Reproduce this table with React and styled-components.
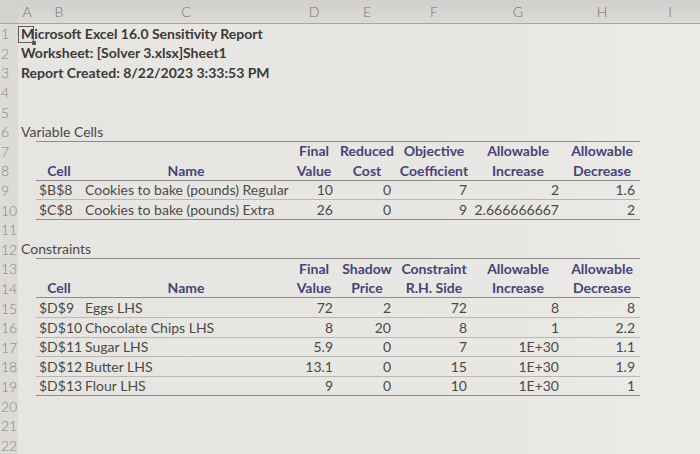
import React from "react";
import styled, { createGlobalStyle } from "styled-components";

const GlobalStyle = createGlobalStyle`
	html, body {
		margin: 0;
		padding: 0;
		background: #e8e6e2;
	}
	body {
		font-family: Lato, "Open Sans", "Liberation Sans", sans-serif;
		overflow: hidden;
	}
`;

// column widths: row numbers, A .. I
const COLS = ["A", "B", "C", "D", "E", "F", "G", "H", "I"];
const WIDTHS = "18px 18px 46px 208px 48px 58px 76px 92px 76px 1fr";

const Sheet = styled.div`
	display: grid;
	grid-template-columns: ${WIDTHS};
	grid-template-rows: 24px;
	grid-auto-rows: 19.6px;
	width: 700px;
	height: 454px;
	background: linear-gradient(90deg, #e7e5e1 0%, #e9e7e3 70%, #ecebe8 100%);
`;

const Corner = styled.div`
	background: #d4d2ce;
	border-bottom: 1px solid #a8a6a2;
`;

const ColHead = styled.div`
	display: flex;
	align-items: center;
	justify-content: center;
	background: linear-gradient(#d2d0cc, #dcdad6);
	border-bottom: 1px solid #a8a6a2;
	color: #747370;
	font-size: 14px;
	font-weight: 300;
`;

const RowNum = styled.div`
	display: flex;
	align-items: center;
	justify-content: flex-start;
	padding-left: 1px;
	background: #dddbd7;
	color: #858481;
	font-size: 14px;
	font-weight: 300;
`;

const Cell = styled.div`
	position: relative;
	display: flex;
	align-items: flex-end;
	justify-content: ${(p) =>
		p.$align === "right" ? "flex-end" : p.$align === "center" ? "center" : "flex-start"};
	padding: 0 ${(p) => (p.$align === "right" ? "5px" : "3px")} 1px 3px;
	white-space: nowrap;
	overflow: visible;
	font-size: 14px;
	font-weight: ${(p) => (p.$bold ? 700 : 400)};
	color: ${(p) => (p.$head ? "#45437a" : p.$bold ? "#3a3a38" : "#4a4947")};
	border-bottom: ${(p) =>
		p.$line === "strong"
			? "1px solid #8e8c88"
			: p.$line === "light"
			? "1px solid #b9b7b3"
			: "1px solid transparent"};
	z-index: ${(p) => (p.$span ? 1 : 0)};
`;

const Selected = styled.div`
	position: absolute;
	left: 0;
	top: 2px;
	width: 16px;
	height: 17px;
	border: 1.5px solid #5b5e57;
	box-sizing: border-box;
	&::after {
		content: "";
		position: absolute;
		right: -3px;
		bottom: -3px;
		width: 4px;
		height: 4px;
		background: #5b5e57;
	}
`;

// cell content: row -> col -> { t, align, bold, head }
const H = (t, align = "center") => ({ t, align, bold: true, head: true });
const N = (t) => ({ t, align: "right" });
const L = (t) => ({ t, align: "left" });

const data = {
	1: { A: { t: "Microsoft Excel 16.0 Sensitivity Report", bold: true, sel: true } },
	2: { A: { t: "Worksheet: [Solver 3.xlsx]Sheet1", bold: true } },
	3: { A: { t: "Report Created: 8/22/2023 3:33:53 PM", bold: true } },
	6: { A: L("Variable Cells") },
	7: {
		D: H("Final"),
		E: H("Reduced"),
		F: H("Objective"),
		G: H("Allowable"),
		H: H("Allowable"),
	},
	8: {
		B: H("Cell"),
		C: H("Name"),
		D: H("Value"),
		E: H("Cost"),
		F: H("Coefficient"),
		G: H("Increase"),
		H: H("Decrease"),
	},
	9: {
		B: L("$B$8"),
		C: L("Cookies to bake (pounds) Regular"),
		D: N("10"),
		E: N("0"),
		F: N("7"),
		G: N("2"),
		H: N("1.6"),
	},
	10: {
		B: L("$C$8"),
		C: L("Cookies to bake (pounds) Extra"),
		D: N("26"),
		E: N("0"),
		F: N("9"),
		G: N("2.666666667"),
		H: N("2"),
	},
	12: { A: L("Constraints") },
	13: {
		D: H("Final"),
		E: H("Shadow"),
		F: H("Constraint"),
		G: H("Allowable"),
		H: H("Allowable"),
	},
	14: {
		B: H("Cell"),
		C: H("Name"),
		D: H("Value"),
		E: H("Price"),
		F: H("R.H. Side"),
		G: H("Increase"),
		H: H("Decrease"),
	},
};

// constraint rows
const constraints = [
	["$D$9", "Eggs LHS", "72", "2", "72", "8", "8"],
	["$D$10", "Chocolate Chips LHS", "8", "20", "8", "1", "2.2"],
	["$D$11", "Sugar LHS", "5.9", "0", "7", "1E+30", "1.1"],
	["$D$12", "Butter LHS", "13.1", "0", "15", "1E+30", "1.9"],
	["$D$13", "Flour LHS", "9", "0", "10", "1E+30", "1"],
];
constraints.forEach((c, i) => {
	data[15 + i] = {
		B: L(c[0]),
		C: L(c[1]),
		D: N(c[2]),
		E: N(c[3]),
		F: N(c[4]),
		G: N(c[5]),
		H: N(c[6]),
	};
});

// table rules under rows, columns B..H
const lines = {
	6: "strong",
	8: "strong",
	9: "light",
	10: "strong",
	12: "strong",
	14: "strong",
	15: "light",
	16: "light",
	17: "light",
	18: "light",
	19: "strong",
};
const ruled = ["B", "C", "D", "E", "F", "G", "H"];

const App = () => {
	const rows = Array.from({ length: 22 }, (_, i) => i + 1);

	return (
		<>
			<GlobalStyle />
			<Sheet>
				<Corner />
				{COLS.map((c) => (
					<ColHead key={c}>{c}</ColHead>
				))}
				{rows.map((r) => (
					<React.Fragment key={r}>
						<RowNum>{r}</RowNum>
						{COLS.map((c) => {
							const cell = (data[r] && data[r][c]) || {};
							const line = lines[r] && ruled.includes(c) ? lines[r] : null;
							return (
								<Cell
									key={c}
									$align={cell.align}
									$bold={cell.bold}
									$head={cell.head}
									$line={line}
									$span={c === "A"}
								>
									{cell.sel && <Selected />}
									{cell.t}
								</Cell>
							);
						})}
					</React.Fragment>
				))}
			</Sheet>
		</>
	);
};

export default App;
